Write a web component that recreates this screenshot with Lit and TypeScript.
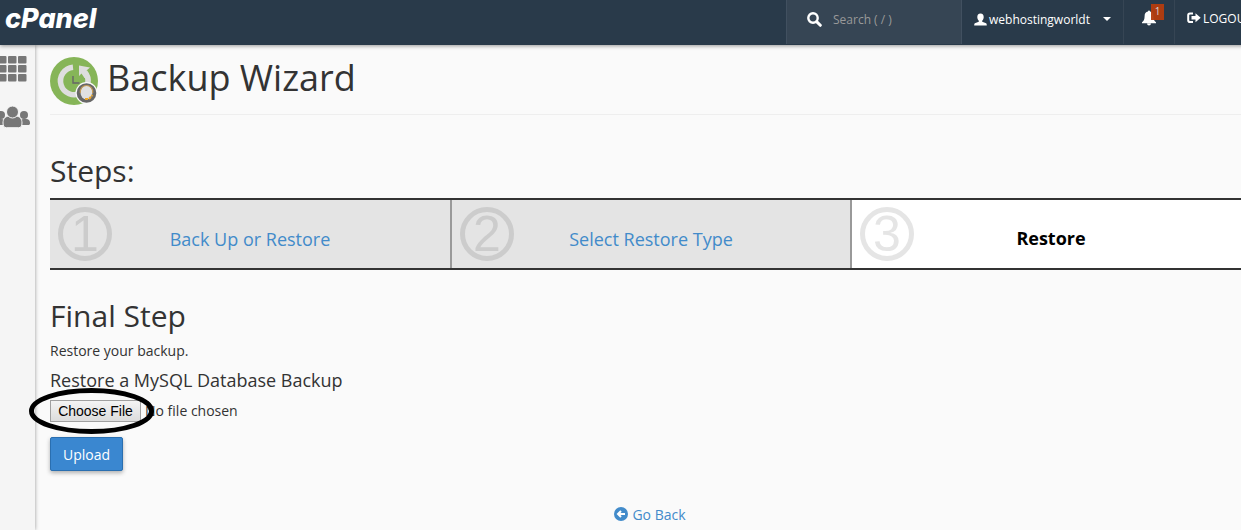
import { LitElement, html, css } from "lit";
import { customElement, property } from "lit/decorators.js";

@customElement("top-bar")
class TopBar extends LitElement {
  static styles = css`
    :host { display: block; position: relative; z-index: 2; }
    .bar {
      display: flex; height: 45px; background: #293a4a; color: #fff;
      font-size: 12px; box-shadow: 0 1px 4px rgba(0, 0, 0, 0.4);
    }
    .brand {
      margin-right: auto; padding-left: 5px; color: #fff; text-decoration: none;
      font: italic 800 27px/38px Inter, sans-serif;
    }
    .search {
      display: flex; align-items: center; gap: 11px; box-sizing: border-box;
      width: 176px; height: 44px; padding: 0 8px 6px 20px; background: #364554;
      border: solid #415060; border-width: 0 1px;
    }
    .search svg { flex: none; }
    .search input {
      min-width: 0; flex: 1; padding: 0; border: 0; outline: 0; background: none;
      color: #fff; font: 12px "Open Sans", sans-serif;
    }
    .search input::placeholder { color: #999; opacity: 1; }
    .item {
      display: flex; align-items: center; box-sizing: border-box; height: 44px;
      padding: 0 12px 6px; border: 0; border-right: 1px solid #364554;
      background: none; color: #fff; font: 12px "Open Sans", sans-serif;
      text-decoration: none; white-space: nowrap;
    }
    .user { width: 162px; gap: 2px; font-weight: 500; }
    .caret { margin-left: auto; }
    .bell { position: relative; width: 51px; padding: 0 18px 8px; }
    .badge {
      position: absolute; top: 4px; left: 27px; width: 13px; height: 16px;
      background: #b53d0e; color: #ddd; font-size: 10px; line-height: 15px;
      text-align: center; opacity: 0.95;
    }
    .logout { width: 90px; gap: 2px; border-right: 0; padding-bottom: 8px; }
  `;
  render() {
    return html`
      <header class="bar">
        <a class="brand" href="#">cPanel</a>
        <label class="search">
          <svg width="15" height="15" viewBox="0 0 15 15" fill="none" stroke="#fff" aria-hidden="true">
            <circle cx="6" cy="6" r="4.7" stroke-width="2.4" />
            <path d="M9.6 9.6 13.3 13.3" stroke-width="3" stroke-linecap="round" />
          </svg>
          <input type="search" placeholder="Search ( / )" aria-label="Search" />
        </label>
        <button class="item user">
          <svg width="13" height="13" viewBox="0 0 13 13" fill="#fff" aria-hidden="true">
            <path d="M6.5.5C8.700.5 9.800 2 9.700 4.200c-.1 1.400-.6 2.700-1.500 3.500v1l3.300 1.200c1 .4 1.300 1 1.300 2.600H.2c0-1.600.3-2.200 1.300-2.600l3.300-1.200v-1C3.900 6.900 3.400 5.600 3.300 4.200 3.200 2 4.300.5 6.500.5z" />
          </svg>
          webhostingworldt
          <svg class="caret" width="8" height="4" viewBox="0 0 8 4" fill="#fff" aria-hidden="true"><path d="M0 0h8L4 4z" /></svg>
        </button>
        <button class="item bell" aria-label="Notifications">
          <svg width="15" height="16" viewBox="0 0 15 16" fill="#fff" aria-hidden="true">
            <path d="M7.500 0c.7 0 1.100.4 1.100 1.100 2.400.5 3.600 2.400 3.600 4.700 0 3.600.9 5.400 2.800 6.800v1.100H0v-1.100c1.900-1.400 2.800-3.200 2.800-6.800 0-2.300 1.200-4.200 3.600-4.700C6.400.4 6.800 0 7.500 0zM5.400 14h4.200a2.100 2 0 0 1-4.200 0z" />
          </svg>
          <span class="badge">1</span>
        </button>
        <a class="item logout" href="#">
          <svg width="14" height="12" viewBox="0 0 14 12" aria-hidden="true">
            <path d="M6 1.400H3A1.800 1.800 0 0 0 1.200 3.200v5A1.800 1.800 0 0 0 3 10H6" fill="none" stroke="#fff" stroke-width="2" />
            <path d="M4.500 4h4V1.300L13.700 5.700 8.500 10.200V7.400h-4z" fill="#fff" />
          </svg>
          LOGOUT
        </a>
      </header>
    `;
  }
}

@customElement("side-nav")
class SideNav extends LitElement {
  static styles = css`
    :host { display: block; flex: none; width: 35px; background: #f5f5f5; box-shadow: 0 0 4px rgba(0, 0, 0, 0.4); }
    .nav { display: flex; flex-direction: column; gap: 24px; padding-top: 11px; }
    .link { display: block; height: 26px; }
  `;
  render() {
    const cols = [-2, 8, 18];
    return html`
      <nav class="nav">
        <a class="link" href="#" aria-label="Home">
          <svg width="32" height="26" viewBox="0 0 32 26" fill="#777">
            ${cols.map((x) => [0, 9, 18].map((y) => this.tile(x, y)))}
          </svg>
        </a>
        <a class="link" href="#" aria-label="User Manager">
          <svg width="32" height="22" viewBox="0 0 32 22" fill="#777">
            <circle cx="1" cy="9" r="4" /><circle cx="24" cy="9" r="4" />
            <path d="M-6 19v-2c0-3 1-4 3-4h4c3 0 4 1 4 3v3zM20 19v-3c0-2 1-3 4-3h2c3 0 4 2 4 4 0 1.500-.5 2-2 2z" />
            <path d="M8.500 10.300C5 10.300 3 13 3 17c0 3 1 4.700 3.500 4.700h12c2.500 0 3.500-1.700 3.500-4.700 0-4-2-6.700-5.500-6.700z" stroke="#f5f5f5" stroke-width="1" />
            <circle cx="12.500" cy="6" r="6" stroke="#f5f5f5" stroke-width="1" />
          </svg>
        </a>
      </nav>
    `;
  }
  private tile(x: number, y: number) {
    return html`<svg x=${x} y=${y} width="9" height="8"><rect width="8.500" height="7.500" rx="1" /></svg>`;
  }
}

@customElement("wizard-steps")
class WizardSteps extends LitElement {
  @property({ type: Number }) current = 3;
  static styles = css`
    .steps {
      display: grid; grid-template-columns: repeat(3, 1fr); margin: 0; padding: 0;
      list-style: none; border: solid #333; border-width: 2px 0;
    }
    .step {
      display: grid; grid-template-columns: 54px 1fr 54px; align-items: center;
      box-sizing: border-box; height: 68px; padding: 0 8px; background: #e4e4e4;
      color: #ccc; font-size: 18px; text-align: center;
    }
    .step + .step { border-left: 2px solid #999; }
    .current { background: #fff; color: #e5e5e5; }
    .num {
      box-sizing: border-box; height: 54px; border: 5px solid; border-radius: 50%;
      font: 50px/44px "Liberation Sans", sans-serif;
    }
    .label { padding-top: 10px; color: #428bca; text-decoration: none; }
    .current .label { padding-top: 8px; color: #000; font-weight: 700; }
  `;
  render() {
    return html`
      <ol class="steps">
        ${["Back Up or Restore", "Select Restore Type", "Restore"].map((label, i) => {
          const active = i + 1 === this.current;
          return html`<li class="step ${active ? "current" : ""}">
            <span class="num">${i + 1}</span>
            ${active ? html`<span class="label">${label}</span>` : html`<a class="label" href="#">${label}</a>`}
          </li>`;
        })}
      </ol>
    `;
  }
}

@customElement("app-root")
class AppRoot extends LitElement {
  static styles = css`
    :host {
      display: block; overflow: hidden; min-height: 100vh; background: #fafafa;
      color: #333; font: 14px/20px "Open Sans", sans-serif;
    }
    .page { display: flex; flex-direction: column; width: calc(100% + 24px); min-height: 100vh; }
    .body { display: flex; flex: 1; }
    .main { flex: 1; padding: 0 15px; }
    .title {
      display: flex; align-items: center; gap: 9px; height: 70px;
      border-bottom: 1px solid #eee; box-sizing: border-box;
    }
    .heading { margin: 0; font-size: 36px; font-weight: 400; line-height: 40px; padding-bottom: 4px; }
    .title svg { margin-top: 2px; }
    .sub { margin: 0; font-size: 30px; font-weight: 400; line-height: 34px; }
    .steps-title { padding: 39px 0 10px; }
    .final { padding: 29px 0 8px; }
    .text { margin: 0; }
    .small { margin: 9px 0; font-size: 18px; font-weight: 400; line-height: 20px; }
    .picker { position: relative; display: flex; align-items: center; height: 24px; }
    .file { font: 14px/20px "Open Sans", sans-serif; color: #333; width: 300px; }
    .file::file-selector-button {
      box-sizing: border-box; width: 91px; height: 22px; margin: 0 4px 0 0; padding: 0;
      border: 1px solid #a0a0a0; border-radius: 0; color: #000;
      background: linear-gradient(#f4f4f4, #dcdcdc); font: 14px "Liberation Sans", sans-serif;
    }
    .ring { position: absolute; left: -21px; top: -11px; pointer-events: none; }
    .upload {
      display: block; height: 34px; margin-top: 14px; padding: 0 12px; border: 1px solid #2a6fb0;
      border-radius: 2px; background: #3a87d0; color: #fff; font: 500 14px "Open Sans", sans-serif;
      box-shadow: 0 2px 4px rgba(0, 0, 0, 0.3);
    }
    .back {
      display: flex; justify-content: center; align-items: center; gap: 4px; width: max-content;
      margin: 34px auto 0; color: #428bca; text-decoration: none;
    }
    .back svg { margin-bottom: 2px; }
  `;
  render() {
    return html`
      <div class="page">
        <top-bar></top-bar>
        <div class="body">
          <side-nav></side-nav>
          <main class="main">
            <div class="title">
              <svg width="48" height="48" viewBox="0 0 48 48" aria-hidden="true">
                <circle cx="24" cy="24" r="24" fill="#86b558" />
                <path d="M23 10.200A13.800 13.800 0 1 0 34.800 15" fill="none" stroke="#dedede" stroke-width="5.600" />
                <path d="M29 8.500 40 10.500 36.500 13.500 40 19.500 34.500 21 31.500 16.500 29 19z" fill="#dedede" />
                <path d="M23 19v7h6.500" fill="none" stroke="#666" stroke-width="1.400" />
                <circle cx="36.500" cy="36" r="11" fill="#fafafa" />
                <circle cx="36.500" cy="36" r="9.800" fill="#676767" />
                <ellipse cx="36.500" cy="35.500" rx="6" ry="7" fill="#e0e0e0" />
                <path d="M30.300 36c-1-10 13.400-10 12.400 0" fill="none" stroke="#c49a55" stroke-width="1.200" />
                <path d="M35 42h4l3.500-4" fill="none" stroke="#e9a52b" stroke-width="2" stroke-dasharray="3 1" />
              </svg>
              <h1 class="heading">Backup Wizard</h1>
            </div>
            <h2 class="sub steps-title">Steps:</h2>
            <wizard-steps current="3"></wizard-steps>
            <h2 class="sub final">Final Step</h2>
            <p class="text">Restore your backup.</p>
            <h4 class="small">Restore a MySQL Database Backup</h4>
            <div class="picker">
              <input class="file" type="file" aria-label="Restore a MySQL Database Backup" />
              <svg class="ring" width="126" height="46" viewBox="0 0 126 46" aria-hidden="true">
                <ellipse cx="62.500" cy="23" rx="60" ry="20.500" fill="none" stroke="#000" stroke-width="5" />
              </svg>
            </div>
            <button class="upload">Upload</button>
            <a class="back" href="#">
              <svg width="14" height="14" viewBox="0 0 14 14" aria-hidden="true">
                <circle cx="7" cy="7" r="7" fill="#428bca" />
                <path d="M11 7H4.500M7 4 4 7l3 3" fill="none" stroke="#fff" stroke-width="2" />
              </svg>
              Go Back
            </a>
          </main>
        </div>
      </div>
    `;
  }
}
